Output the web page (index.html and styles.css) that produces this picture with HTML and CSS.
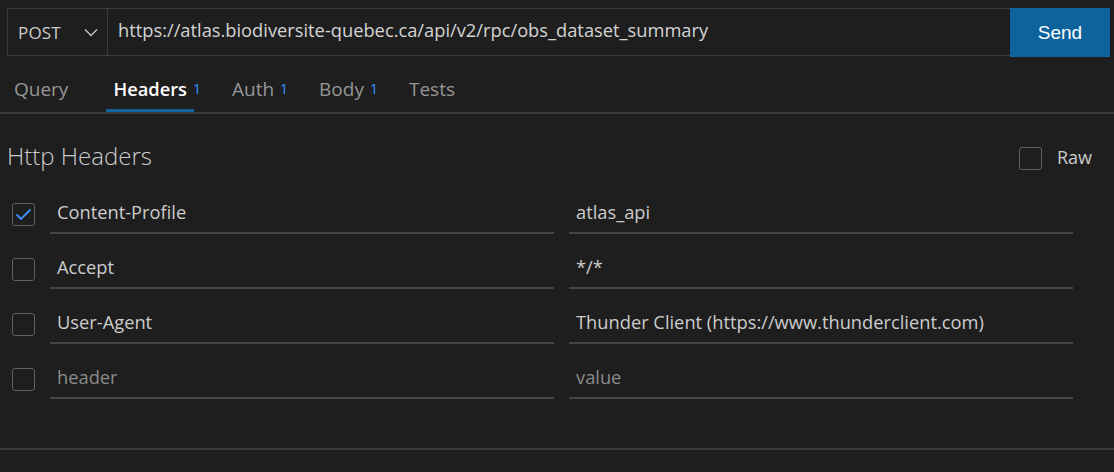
FILE: index.html
```html
<!DOCTYPE html>
<html>
<head>
<meta charset="utf-8">
<link rel="stylesheet" href="styles.css">
</head>
<body>
<div class="app">
  <div class="urlbar">
    <div class="method">
      <span class="method-text">POST</span>
      <svg class="chev" width="14" height="9" viewBox="0 0 14 9"><path d="M1 1.5 L7 7.5 L13 1.5" fill="none" stroke="#c5c5c5" stroke-width="1.3"/></svg>
    </div>
    <div class="url">https://atlas.biodiversite-quebec.ca/api/v2/rpc/obs_dataset_summary</div>
    <div class="send">Send</div>
  </div>
  <div class="tabs">
    <div class="tab">Query</div>
    <div class="tab active">Headers<sup class="count">1</sup></div>
    <div class="tab">Auth<sup class="count">1</sup></div>
    <div class="tab">Body<sup class="count">1</sup></div>
    <div class="tab">Tests</div>
  </div>
  <div class="panel">
    <div class="panel-head">
      <div class="title">Http Headers</div>
      <div class="raw"><span class="box"></span><span class="raw-label">Raw</span></div>
    </div>
    <div class="rows">
      <div class="row">
        <span class="box checked"><svg width="17" height="13" viewBox="0 0 17 13"><path d="M1.5 6.5 L6 11 L15.5 1.5" fill="none" stroke="#3794ff" stroke-width="1.8"/></svg></span>
        <div class="field">Content-Profile</div>
        <div class="field">atlas_api</div>
      </div>
      <div class="row">
        <span class="box"></span>
        <div class="field">Accept</div>
        <div class="field">*/*</div>
      </div>
      <div class="row">
        <span class="box"></span>
        <div class="field">User-Agent</div>
        <div class="field">Thunder Client (https://www.thunderclient.com)</div>
      </div>
      <div class="row">
        <span class="box"></span>
        <div class="field placeholder">header</div>
        <div class="field placeholder">value</div>
      </div>
    </div>
  </div>
</div>
</body>
</html>
```

FILE: styles.css
```css
html, body {
  margin: 0;
  padding: 0;
  background: #1e1e1e;
}
body {
  font-family: "Open Sans", "Noto Sans", sans-serif;
  color: #cccccc;
  width: 1114px;
  height: 472px;
  overflow: hidden;
}
.app {
  padding-top: 8px;
}
.urlbar {
  display: flex;
  margin-left: 7px;
  margin-right: 4px;
  height: 48px;
}
.method {
  width: 100px;
  border: 1px solid #3c3c3c;
  border-right: none;
  display: flex;
  align-items: center;
  justify-content: space-between;
  padding: 0 9px 0 10px;
  box-sizing: border-box;
  font-size: 17px;
  color: #cccccc;
}
.method-text {
  letter-spacing: 0.2px;
}
.chev {
  margin-top: 1px;
}
.url {
  flex: 1;
  border: 1px solid #3c3c3c;
  border-right: none;
  display: flex;
  align-items: center;
  padding-left: 10px;
  padding-bottom: 6px;
  box-sizing: border-box;
  font-size: 18.3px;
  color: #d4d4d4;
}
.send {
  width: 100px;
  height: 49px;
  background: #0e639c;
  color: #ffffff;
  font-family: "Liberation Sans", Arial, sans-serif;
  font-size: 19px;
  display: flex;
  align-items: center;
  justify-content: center;
}
.tabs {
  display: flex;
  gap: 31px;
  height: 58px;
  border-bottom: 2px solid #3c3c3c;
  box-sizing: border-box;
  padding-left: 7px;
}
.tab {
  position: relative;
  padding: 20px 7px 0 7px;
  font-size: 19px;
  line-height: 26px;
  color: #969696;
  box-sizing: border-box;
  height: 56px;
}
.tab.active {
  color: #ffffff;
  font-weight: 600;
  font-size: 18.3px;
  border-bottom: 3px solid #0e639c;
}
.count {
  position: absolute;
  left: calc(100% - 1px);
  top: 26px;
  color: #3794ff;
  font-size: 14px;
  font-weight: 400;
  line-height: 14px;
  vertical-align: baseline;
}
.panel {
  height: 336px;
  border-bottom: 2px solid #3c3c3c;
  box-sizing: border-box;
}
.panel-head {
  display: flex;
  justify-content: space-between;
  align-items: center;
  padding: 0 22px 0 7px;
  height: 88px;
}
.title {
  font-size: 24px;
  color: #cccccc;
  font-weight: 300;
  margin-bottom: 5px;
}
.raw {
  display: flex;
  align-items: center;
  gap: 15px;
}
.raw-label {
  font-size: 18px;
  color: #cccccc;
  margin-bottom: 2px;
}
.box {
  width: 23px;
  height: 23px;
  border: 1px solid #606060;
  border-radius: 3px;
  box-sizing: border-box;
  display: flex;
  align-items: center;
  justify-content: center;
  flex: none;
}
.rows {
  padding-left: 12px;
  display: flex;
  flex-direction: column;
}
.row {
  display: flex;
  align-items: flex-start;
  gap: 15px;
  height: 55px;
}
.row .box {
  margin-top: 1px;
}
.field {
  width: 504px;
  height: 32px;
  border-bottom: 2px solid #464646;
  padding-left: 7px;
  box-sizing: border-box;
  font-size: 18.3px;
  color: #cccccc;
  line-height: 19px;
}
.field.placeholder {
  color: #8b8b8b;
}
```
